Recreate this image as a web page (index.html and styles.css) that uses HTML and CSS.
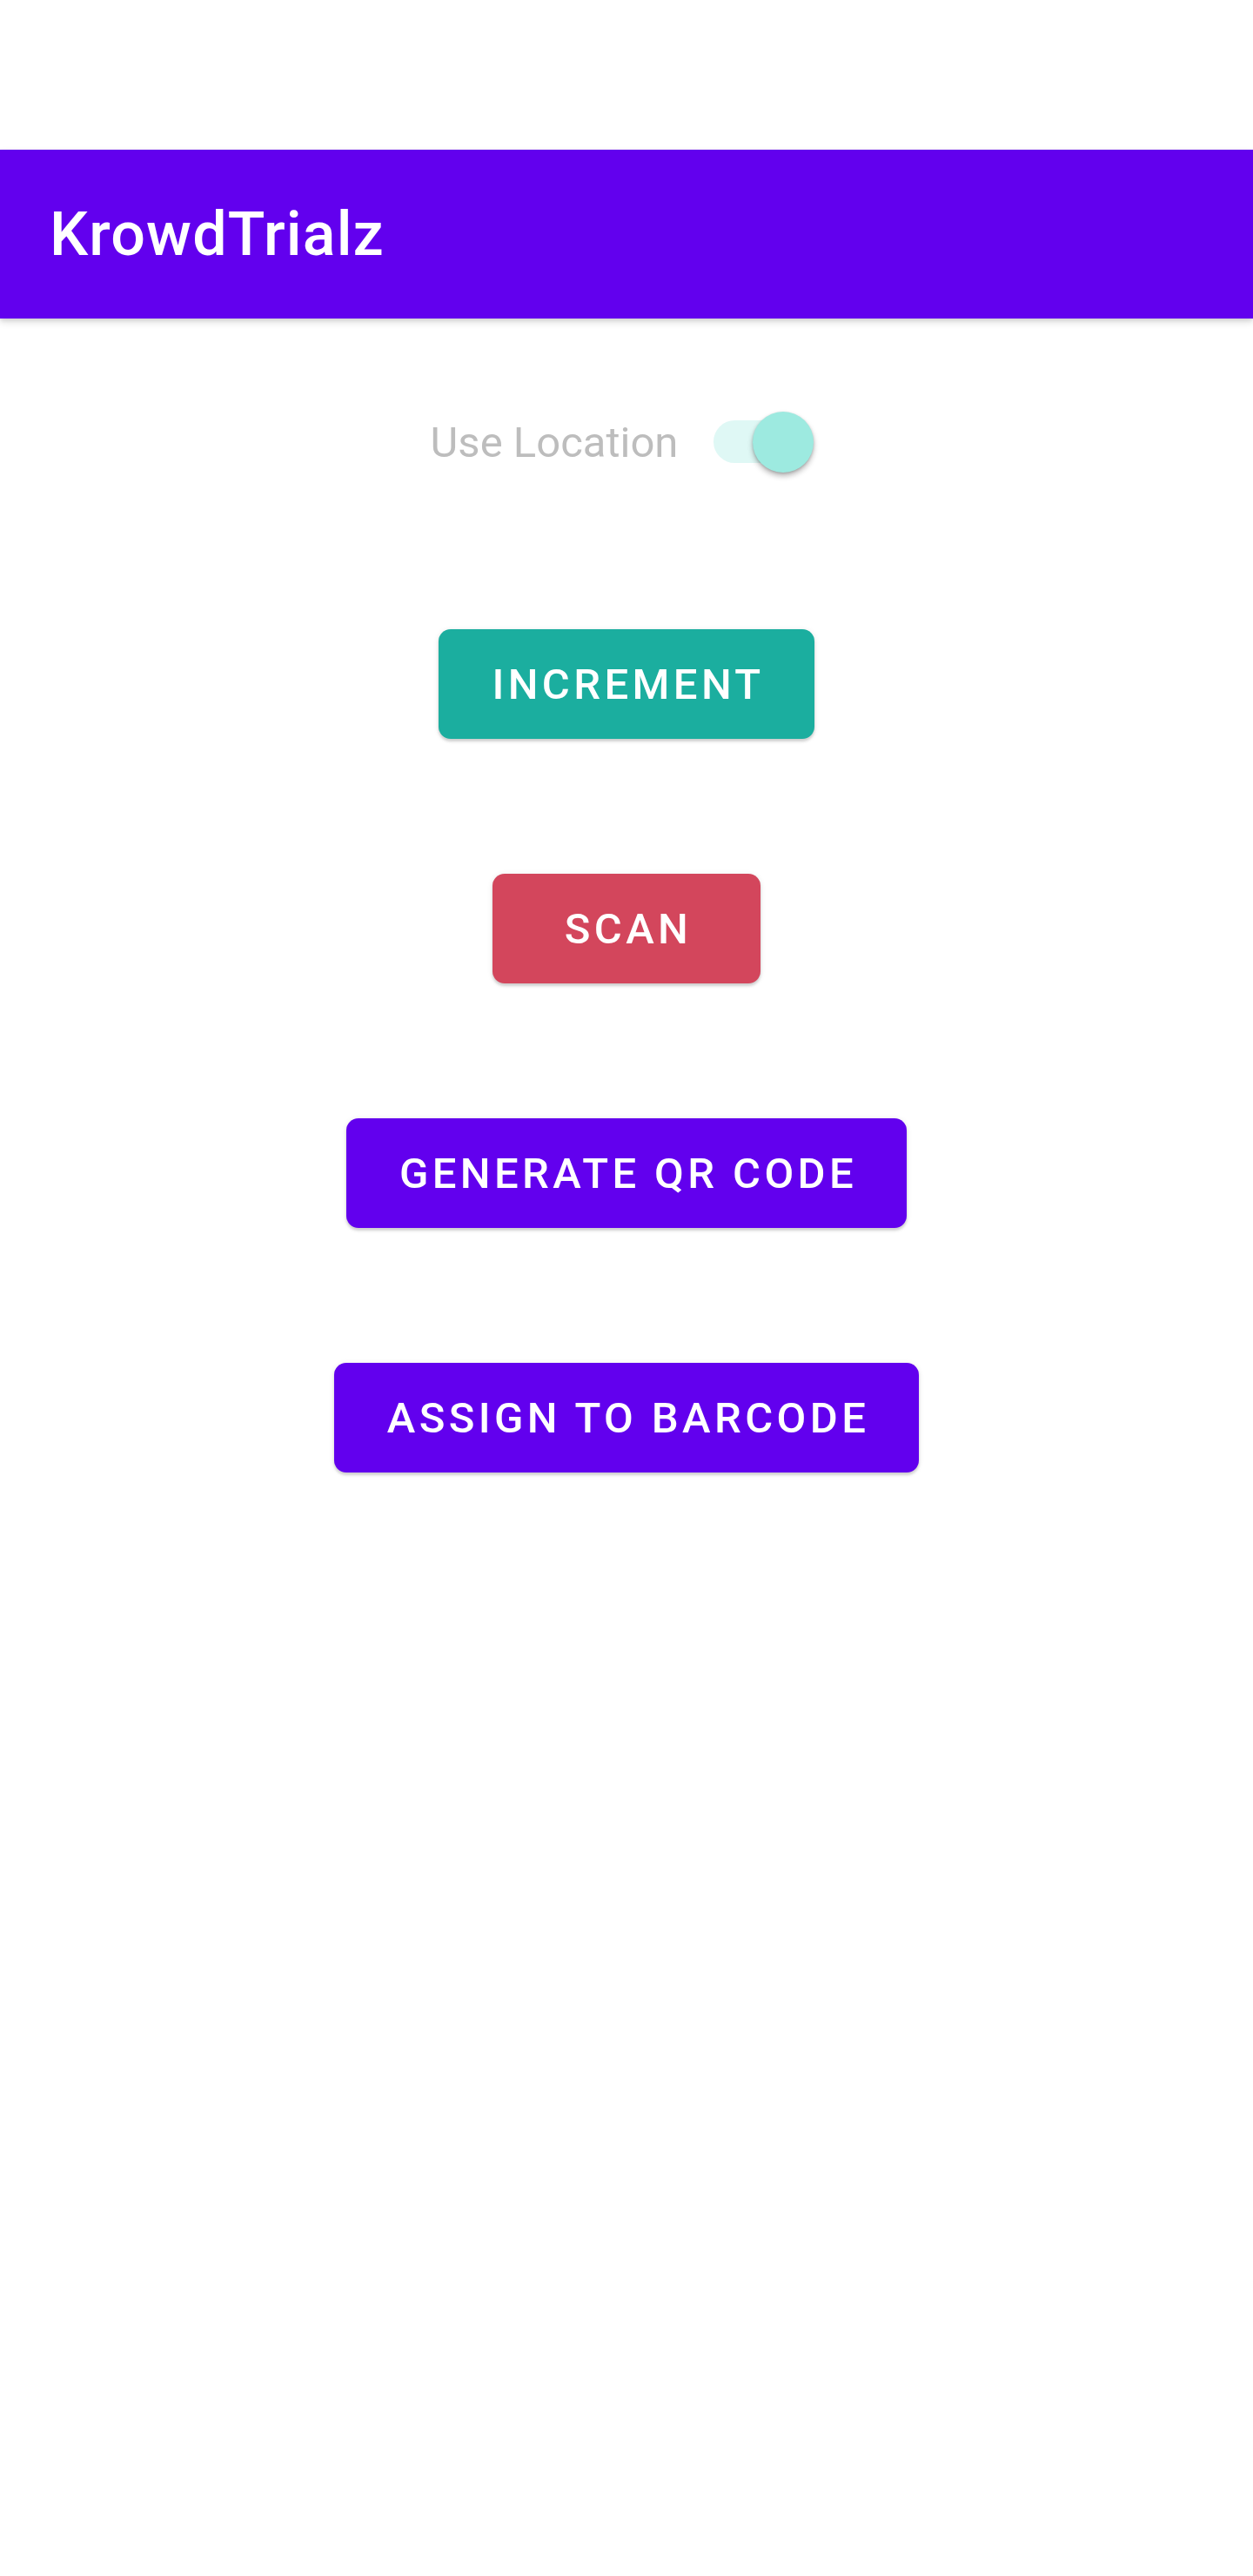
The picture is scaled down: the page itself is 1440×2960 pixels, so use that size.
FILE: index.html
```html
<!DOCTYPE html>
<html lang="en">
<head>
<meta charset="utf-8">
<title>KrowdTrialz</title>
<link rel="stylesheet" href="styles.css">
</head>
<body>
<div class="status-bar"></div>
<header class="app-bar">
  <h1 class="app-title">KrowdTrialz</h1>
</header>
<main class="content">
  <label class="switch-row">
    <span class="switch-label">Use Location</span>
    <span class="switch">
      <span class="switch-track"></span>
      <span class="switch-thumb"></span>
    </span>
  </label>
  <button class="btn btn-teal btn-first">Increment</button>
  <button class="btn btn-red">Scan</button>
  <button class="btn btn-purple">Generate QR Code</button>
  <button class="btn btn-purple">Assign to Barcode</button>
</main>
</body>
</html>
```

FILE: styles.css
```css
html, body {
  margin: 0;
  padding: 0;
  background: #ffffff;
}

body {
  width: 1440px;
  min-height: 2960px;
  font-family: Roboto, "Noto Sans", "Liberation Sans", sans-serif;
}

.status-bar {
  height: 172px;
  background: #ffffff;
}

.app-bar {
  height: 194px;
  background: #6200ee;
  display: flex;
  align-items: center;
  padding-left: 57px;
  box-shadow: 0 4px 8px rgba(0, 0, 0, 0.14), 0 2px 4px rgba(0, 0, 0, 0.08);
  position: relative;
  z-index: 1;
}

.app-title {
  margin: 0;
  color: #ffffff;
  font-size: 70px;
  font-weight: 500;
  line-height: 1;
  letter-spacing: 1.1px;
}

.content {
  display: flex;
  flex-direction: column;
  align-items: center;
  padding-top: 107px;
}

.switch-row {
  display: flex;
  align-items: center;
  gap: 41px;
  height: 70px;
  padding-right: 10px;
}

.switch-label {
  font-size: 49px;
  color: #bdbdbd;
  line-height: 1;
}

.switch {
  position: relative;
  width: 115px;
  height: 70px;
  display: block;
}

.switch-track {
  position: absolute;
  left: 0;
  top: 10px;
  width: 108px;
  height: 49px;
  border-radius: 25px;
  background: #dff8f5;
}

.switch-thumb {
  position: absolute;
  left: 45px;
  top: 0;
  width: 70px;
  height: 70px;
  border-radius: 50%;
  background: #9deae0;
  box-shadow: 0 4px 6px rgba(0, 0, 0, 0.28), 0 1px 3px rgba(0, 0, 0, 0.16);
}

.btn {
  display: flex;
  align-items: center;
  justify-content: center;
  height: 126px;
  min-width: 308px;
  padding: 0 57px 0 61px;
  margin-top: 155px;
  border: none;
  border-radius: 14px;
  font-family: Roboto, "Noto Sans", "Liberation Sans", sans-serif;
  font-size: 49px;
  font-weight: 500;
  letter-spacing: 4.4px;
  text-transform: uppercase;
  color: #ffffff;
  box-shadow: 0 3px 3px rgba(0, 0, 0, 0.14), 0 1px 6px rgba(0, 0, 0, 0.1);
  box-sizing: border-box;
}

.btn-first {
  margin-top: 180px;
}

.btn-teal {
  background: #1bae9f;
}

.btn-red {
  background: #d3465c;
}

.btn-purple {
  background: #6200ee;
}
```
